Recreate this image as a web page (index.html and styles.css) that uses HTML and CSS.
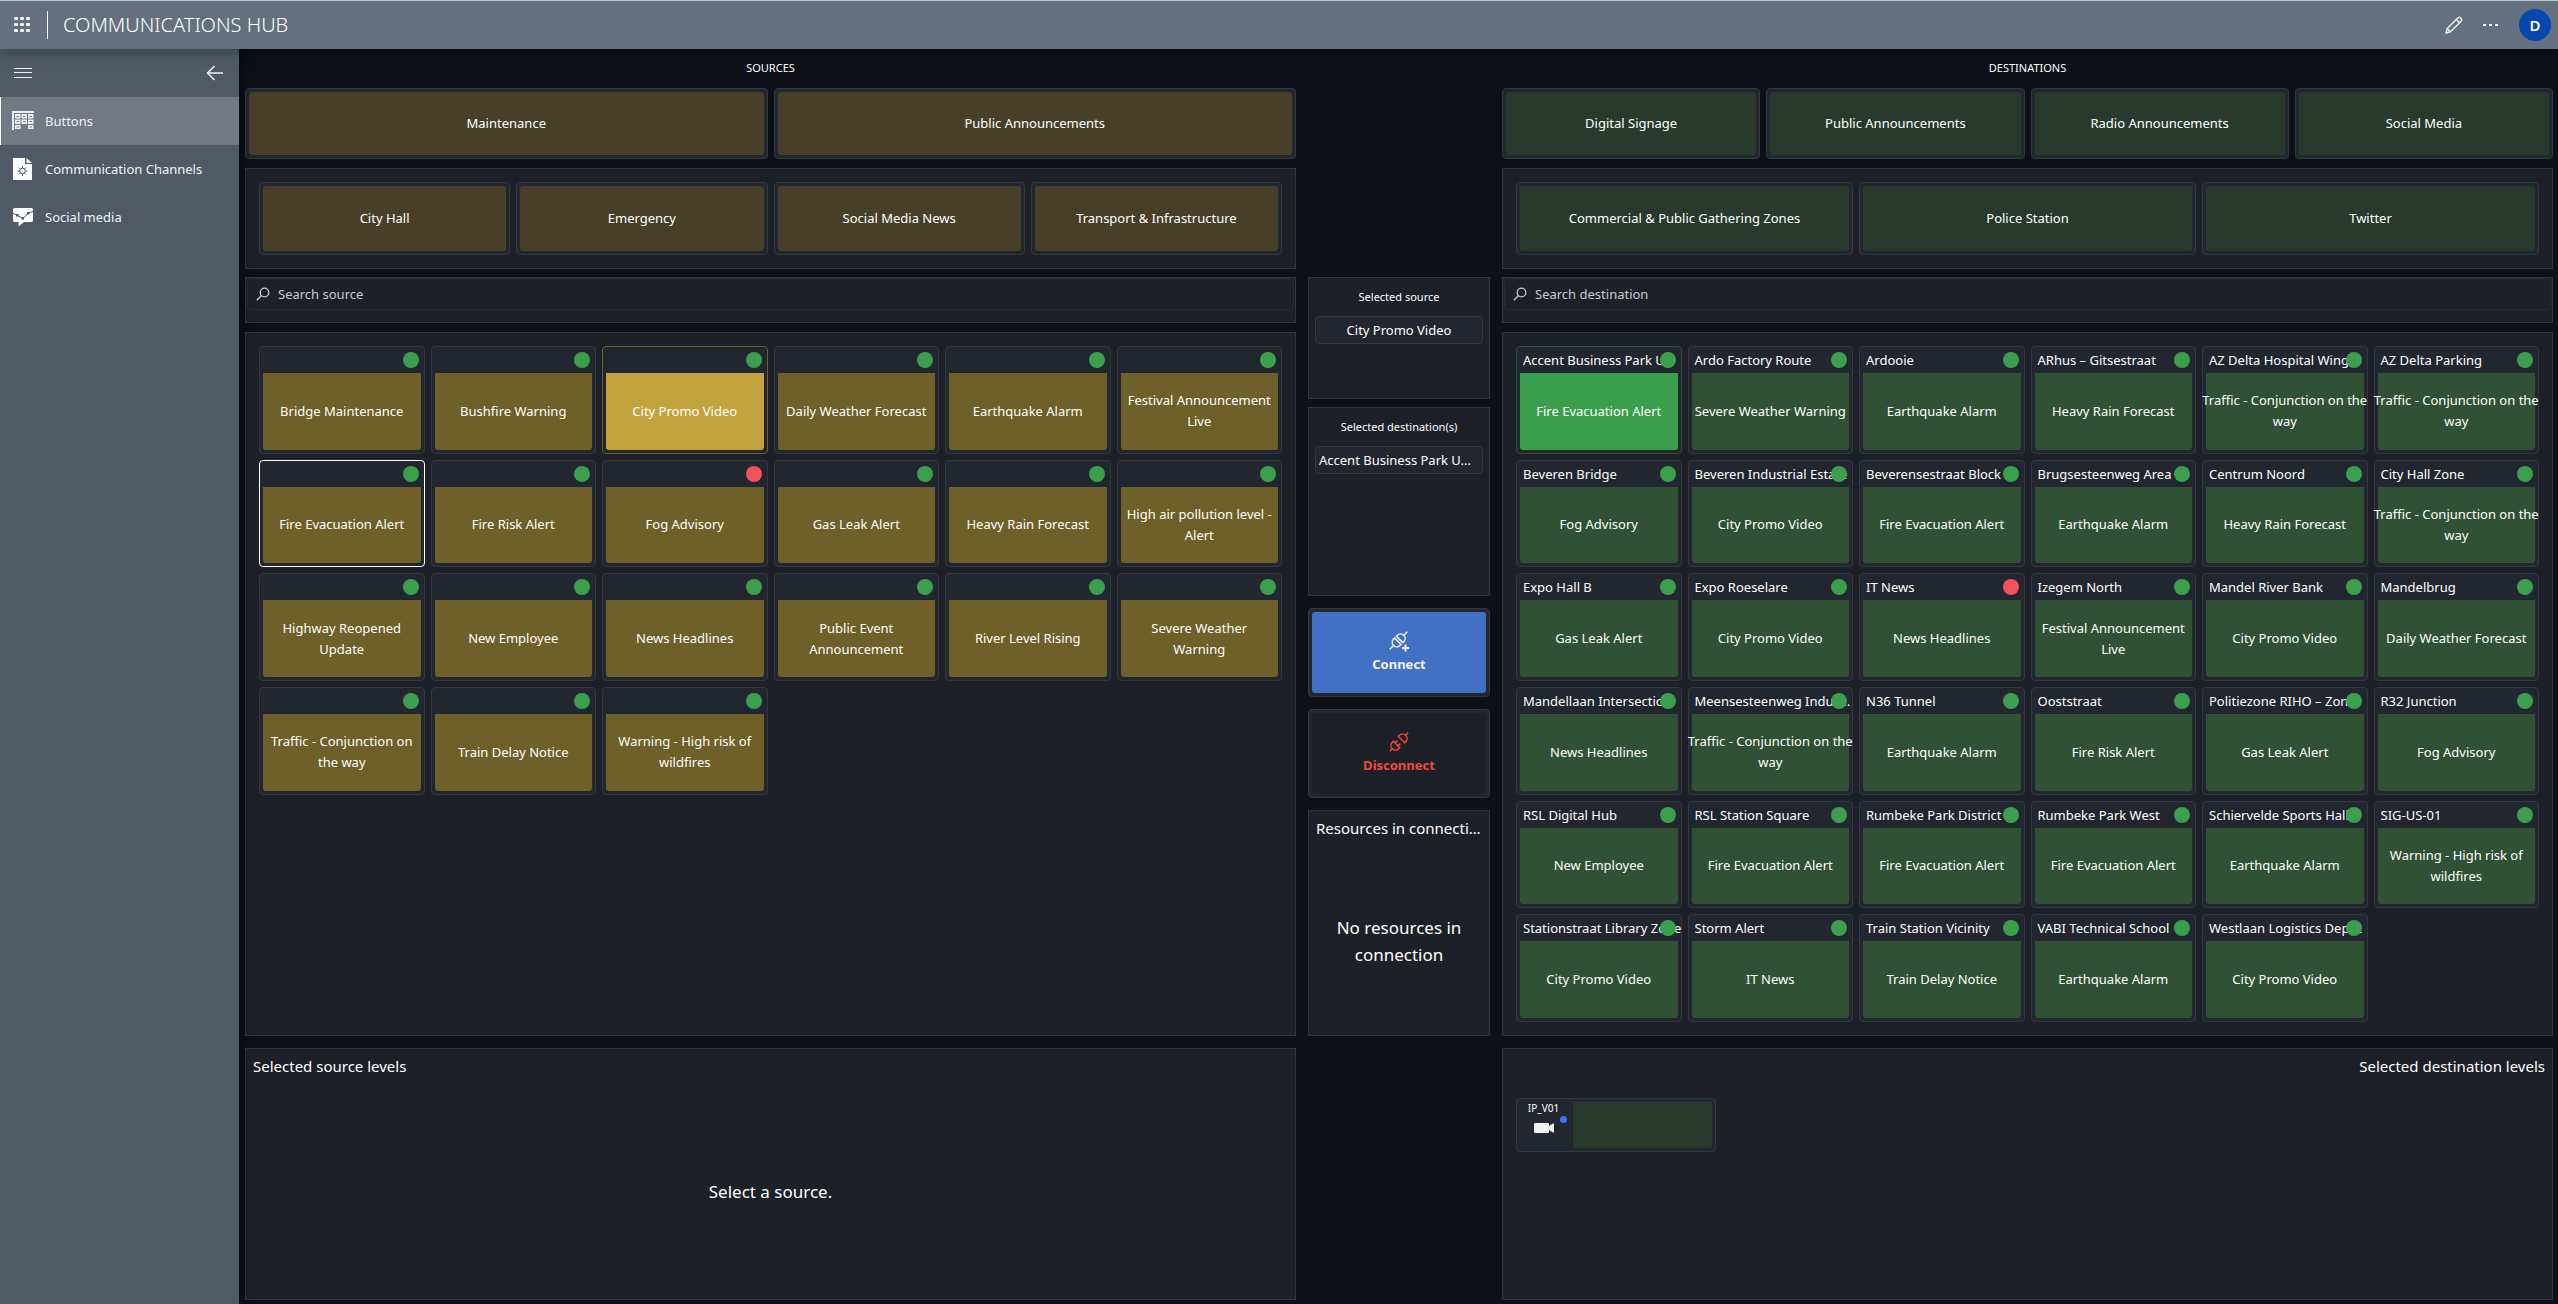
FILE: index.html
```html
<!DOCTYPE html>
<html lang="en">
  <head>
    <meta charset="UTF-8" />
    <meta name="viewport" content="width=device-width, initial-scale=1.0" />
    <title>Communications Hub</title>
    <link rel="stylesheet" href="styles.css">
  </head>
  <body>
    <header class="topbar">
      <button class="icon-btn" aria-label="Apps">
        <svg width="18" height="18" viewBox="0 0 18 18" fill="currentColor">
          <rect x="0" y="1" width="4" height="3" rx="1" /><rect x="6" y="1" width="4" height="3" rx="1" /><rect x="12" y="1" width="4" height="3" rx="1" />
          <rect x="0" y="7" width="4" height="3" rx="1" /><rect x="6" y="7" width="4" height="3" rx="1" /><rect x="12" y="7" width="4" height="3" rx="1" />
          <rect x="0" y="13" width="4" height="3" rx="1" /><rect x="6" y="13" width="4" height="3" rx="1" /><rect x="12" y="13" width="4" height="3" rx="1" />
        </svg>
      </button>
      <h1 class="title">COMMUNICATIONS HUB</h1>
      <div class="topbar-actions">
        <button class="icon-btn" aria-label="Edit">
          <svg width="18" height="18" viewBox="0 0 18 18" fill="none" stroke="currentColor" stroke-width="1.4" stroke-linejoin="round">
            <path d="M1 17l1.2-4.500L12.800 1.900a2 2 0 0 1 2.800 0l.5.5a2 2 0 0 1 0 2.800L5.500 15.800z" />
            <path d="M11.300 3.400l3.300 3.300M2.200 12.500l3.300 3.300" />
          </svg>
        </button>
        <button class="icon-btn" aria-label="More">
          <svg width="16" height="4" viewBox="0 0 16 4" fill="currentColor">
            <rect x="0" y="1" width="3" height="2" /><rect x="6" y="1" width="3" height="2" /><rect x="12" y="1" width="3" height="2" />
          </svg>
        </button>
        <button class="avatar">D</button>
      </div>
    </header>

    <div class="layout">
      <nav class="sidebar">
        <div class="sidebar-top">
          <button class="icon-btn" aria-label="Menu">
            <svg width="18" height="10" viewBox="0 0 18 10" stroke="currentColor" stroke-width="1">
              <path d="M0 .5h18M0 4.500h18M0 9.500h18" />
            </svg>
          </button>
          <button class="icon-btn" aria-label="Collapse">
            <svg width="18" height="16" viewBox="0 0 18 16" fill="none" stroke="currentColor" stroke-width="1.5">
              <path d="M8.500 1L1.500 8l7 7M1.500 8H17" />
            </svg>
          </button>
        </div>
        <a class="nav-item active" href="#">
          <svg width="22" height="20" viewBox="0 0 22 20">
            <path fill="#eee" d="M0 0h22v2H2v17H0zM3 3h5.500v4.500H3zM9.500 3H15v4.500H9.500zM16 3h5.500v4.500H16zM3 8.500h5.500V13H3zM9.500 8.500H15V13H9.500zM16 8.500h5.500V13H16zM3 14h5.500v4H3zM16 14h5.500v4H16z" />
            <path stroke="#727884" d="M4.500 5.500h2.500M11 5.500h2.500M17.500 5.500H20M4.500 10.500h2.500M11 10.500h2.500M17.500 10.500H20M4.500 16h2.500M17.500 16H20" />
          </svg>
          Buttons
        </a>
        <a class="nav-item" href="#">
          <svg width="22" height="22" viewBox="0 0 22 22">
            <path fill="#fff" d="M1 0h12v6h7v16H1z" />
            <path fill="#fff" d="M14.500 0L20 5h-5.500z" />
            <circle cx="10.500" cy="13" r="2.800" fill="none" stroke="#505a66" />
            <path stroke="#505a66" d="M10.500 8v2M10.500 16v2M5.500 13h2M13.500 13h2M7 9.500l1.500 1.500M12.500 15l1.500 1.500M14 9.500L12.500 11M8.500 15L7 16.500" />
          </svg>
          Communication Channels
        </a>
        <a class="nav-item" href="#">
          <svg width="22" height="20" viewBox="0 0 22 20">
            <path fill="#fff" d="M2.500 1h17a1.500 1.500 0 0 1 1.500 1.500v11a1.500 1.500 0 0 1-1.500 1.500H12l-5.500 4.500V15h-4A1.500 1.500 0 0 1 1 13.500v-11A1.500 1.500 0 0 1 2.500 1z" />
            <path fill="none" stroke="#505a66" d="M1 6.500l4 1.500 6 3.500 5.500-5.500 4.500-1.500" />
            <path fill="#505a66" d="M4 7h2.500v2.500H4zM9.500 10H12v2.500H9.500zM15 5h2.500v2.500H15z" />
          </svg>
          Social media
        </a>
      </nav>

      <main class="board">
        <section class="groups">
          <h2 class="side-label">SOURCES</h2>
          <div class="group-row">
            <button class="card source-group"><span class="face">Maintenance</span></button>
            <button class="card source-group"><span class="face">Public Announcements</span></button>
          </div>
          <div class="panel group-row sub-groups">
            <button class="card source-group"><span class="face">City Hall</span></button>
            <button class="card source-group"><span class="face">Emergency</span></button>
            <button class="card source-group"><span class="face">Social Media News</span></button>
            <button class="card source-group"><span class="face">Transport &amp; Infrastructure</span></button>
          </div>
        </section>

        <section class="groups destination-side">
          <h2 class="side-label">DESTINATIONS</h2>
          <div class="group-row">
            <button class="card destination-group"><span class="face">Digital Signage</span></button>
            <button class="card destination-group"><span class="face">Public Announcements</span></button>
            <button class="card destination-group"><span class="face">Radio Announcements</span></button>
            <button class="card destination-group"><span class="face">Social Media</span></button>
          </div>
          <div class="panel group-row sub-groups">
            <button class="card destination-group"><span class="face">Commercial &amp; Public Gathering Zones</span></button>
            <button class="card destination-group"><span class="face">Police Station</span></button>
            <button class="card destination-group"><span class="face">Twitter</span></button>
          </div>
        </section>

        <section class="resources">
          <div class="panel search-panel">
            <label class="search">
              <svg width="14" height="14" viewBox="0 0 14 14" fill="none" stroke="currentColor" stroke-width="1.3">
                <circle cx="8.500" cy="5.500" r="4.300" /><path d="M5.500 8.500L.8 13.200" />
              </svg>
              <input type="text" placeholder="Search source" aria-label="Search source" />
            </label>
          </div>
          <div class="panel tiles" id="sources"></div>
        </section>

        <section class="middle">
          <div class="selection">
            <div class="panel selected-source">
              <h3 class="small-title">Selected source</h3>
              <div class="chip">City Promo Video</div>
            </div>
            <div class="panel selected-destinations">
              <h3 class="small-title">Selected destination(s)</h3>
              <div class="chip chip-left">Accent Business Park U...</div>
            </div>
          </div>
          <button class="card action connect">
            <span class="face">
              <svg width="20" height="20" viewBox="0 0 20 20" fill="none" stroke="currentColor" stroke-width="1.5">
                <g transform="rotate(-45 9.5 9.5)">
                  <path d="M-3 9.500h5.500M8.500 5v9H7a4.500 4.500 0 0 1 0-9zM11 5v9h1.500a4.500 4.500 0 0 0 0-9zM17 9.500h5" />
                </g>
                <path stroke-width="2" d="M13 17h7M16.500 13.500v7" />
              </svg>
              Connect
            </span>
          </button>
          <button class="card action disconnect">
            <span class="face">
              <svg width="20" height="20" viewBox="0 0 20 20" fill="none" stroke="currentColor" stroke-width="1.5">
                <g transform="rotate(-45 10 10)">
                  <path d="M-3 10h3.500M6.500 5.500v9H5a4.500 4.500 0 0 1 0-9zM13.500 5.500v9H15a4.500 4.500 0 0 0 0-9zM19.500 10H23M6.500 8H10M6.500 12H10" />
                </g>
              </svg>
              Disconnect
            </span>
          </button>
          <div class="panel connection">
            <h3 class="panel-title">Resources in connection</h3>
            <p class="empty">No resources in connection</p>
          </div>
        </section>

        <section class="resources">
          <div class="panel search-panel">
            <label class="search">
              <svg width="14" height="14" viewBox="0 0 14 14" fill="none" stroke="currentColor" stroke-width="1.3">
                <circle cx="8.500" cy="5.500" r="4.300" /><path d="M5.500 8.500L.8 13.200" />
              </svg>
              <input type="text" placeholder="Search destination" aria-label="Search destination" />
            </label>
          </div>
          <div class="panel tiles" id="destinations"></div>
        </section>

        <section class="panel levels">
          <h3 class="panel-title">Selected source levels</h3>
          <p class="empty">Select a source.</p>
        </section>

        <section class="panel levels destination-side">
          <h3 class="panel-title">Selected destination levels</h3>
          <button class="card level" aria-label="IP_V01">
            <span class="level-info">
              <span class="level-name">IP_V01</span>
              <svg width="20" height="10" viewBox="0 0 20 10" fill="#f2f2f2">
                <path d="M1 0h13q1 0 1 1v2l4-2.500h1v9h-1L15 7v2q0 1-1 1H1q-1 0-1-1V1q0-1 1-1z" />
              </svg>
              <span class="level-dot"></span>
            </span>
            <span class="face destination-face"></span>
          </button>
        </section>
      </main>
    </div>
    <script src="app.js"></script>
  </body>
</html>
```
FILE: app.js
```js
//Sources: name of each source and its state
const sources = [
  { face: "Bridge Maintenance" },
  { face: "Bushfire Warning" },
  { face: "City Promo Video", state: "selected" },
  { face: "Daily Weather Forecast" },
  { face: "Earthquake Alarm" },
  { face: "Festival Announcement Live" },
  { face: "Fire Evacuation Alert", state: "current" },
  { face: "Fire Risk Alert" },
  { face: "Fog Advisory", error: true },
  { face: "Gas Leak Alert" },
  { face: "Heavy Rain Forecast" },
  { face: "High air pollution level - Alert" },
  { face: "Highway Reopened Update" },
  { face: "New Employee" },
  { face: "News Headlines" },
  { face: "Public Event Announcement" },
  { face: "River Level Rising" },
  { face: "Severe Weather Warning" },
  { face: "Traffic - Conjunction on the way" },
  { face: "Train Delay Notice" },
  { face: "Warning - High risk of wildfires" },
];

//Destinations: name and the source connected to it
const destinations = [
  { name: "Accent Business Park U", face: "Fire Evacuation Alert", state: "selected" },
  { name: "Ardo Factory Route", face: "Severe Weather Warning" },
  { name: "Ardooie", face: "Earthquake Alarm" },
  { name: "ARhus – Gitsestraat", face: "Heavy Rain Forecast" },
  { name: "AZ Delta Hospital Wing C", face: "Traffic - Conjunction on the way" },
  { name: "AZ Delta Parking", face: "Traffic - Conjunction on the way" },
  { name: "Beveren Bridge", face: "Fog Advisory" },
  { name: "Beveren Industrial Estate", face: "City Promo Video" },
  { name: "Beverensestraat Block", face: "Fire Evacuation Alert" },
  { name: "Brugsesteenweg Area", face: "Earthquake Alarm" },
  { name: "Centrum Noord", face: "Heavy Rain Forecast" },
  { name: "City Hall Zone", face: "Traffic - Conjunction on the way" },
  { name: "Expo Hall B", face: "Gas Leak Alert" },
  { name: "Expo Roeselare", face: "City Promo Video" },
  { name: "IT News", face: "News Headlines", error: true },
  { name: "Izegem North", face: "Festival Announcement Live" },
  { name: "Mandel River Bank", face: "City Promo Video" },
  { name: "Mandelbrug", face: "Daily Weather Forecast" },
  { name: "Mandellaan Intersection", face: "News Headlines" },
  { name: "Meensesteenweg Indus...", face: "Traffic - Conjunction on the way" },
  { name: "N36 Tunnel", face: "Earthquake Alarm" },
  { name: "Ooststraat", face: "Fire Risk Alert" },
  { name: "Politiezone RIHO – Zon...", face: "Gas Leak Alert" },
  { name: "R32 Junction", face: "Fog Advisory" },
  { name: "RSL Digital Hub", face: "New Employee" },
  { name: "RSL Station Square", face: "Fire Evacuation Alert" },
  { name: "Rumbeke Park District", face: "Fire Evacuation Alert" },
  { name: "Rumbeke Park West", face: "Fire Evacuation Alert" },
  { name: "Schiervelde Sports Hall", face: "Earthquake Alarm" },
  { name: "SIG-US-01", face: "Warning - High risk of wildfires" },
  { name: "Stationstraat Library Zone", face: "City Promo Video" },
  { name: "Storm Alert", face: "IT News" },
  { name: "Train Station Vicinity", face: "Train Delay Notice" },
  { name: "VABI Technical School", face: "Earthquake Alarm" },
  { name: "Westlaan Logistics Depot", face: "City Promo Video" },
];

function addTiles(id, items, kind) {
  const container = document.getElementById(id);
  items.forEach((item) => {
    const tile = document.createElement("button");
    tile.className = `card tile ${kind} ${item.state || ""}`;

    const name = document.createElement("span");
    name.className = "tile-name";
    name.textContent = item.name || "";

    const face = document.createElement("span");
    face.className = "face";
    const text = document.createElement("span");
    text.className = "face-text";
    text.textContent = item.face;
    face.append(text);

    const dot = document.createElement("span");
    dot.className = item.error ? "dot error" : "dot";

    tile.append(name, face, dot);
    container.append(tile);
  });
}

addTiles("sources", sources, "source");
addTiles("destinations", destinations, "destination");
```
FILE: styles.css
```css
* {
  box-sizing: border-box;
}
body {
  margin: 0;
  min-height: 100vh;
  display: flex;
  flex-direction: column;
  background-color: #0d1017;
  color: #fff;
  font-family: "Noto Sans", "Open Sans", sans-serif;
  font-size: 13px;
  line-height: 21px;
}
h1,
h2,
h3,
p {
  margin: 0;
  font-weight: 400;
}
button,
input {
  font: inherit;
  color: inherit;
}
svg {
  display: block;
  flex: none;
  overflow: visible;
}

/* Top bar */
.topbar {
  position: relative;
  z-index: 2;
  height: 49px;
  display: flex;
  align-items: center;
  padding: 0 7px 0 14px;
  background-color: #647080;
  border-top: 1px solid #c3c8c6;
  box-shadow: 0 2px 14px rgba(0, 0, 0, 0.35);
}
.icon-btn {
  padding: 0;
  border: 0;
  background: none;
  color: #f2f2f2;
}
.title {
  margin-left: 15px;
  padding-left: 15px;
  border-left: 1px solid #fff;
  font-size: 20px;
  font-weight: 300;
  line-height: 28px;
}
.topbar-actions {
  margin-left: auto;
  display: flex;
  align-items: center;
  gap: 20px;
}
.avatar {
  width: 32px;
  height: 32px;
  padding: 0;
  border: 0;
  border-radius: 50%;
  background-color: #0747b2;
  font-size: 15px;
  font-weight: 600;
}

.layout {
  flex: 1;
  display: flex;
}

/* Sidebar */
.sidebar {
  position: relative;
  z-index: 1;
  flex: none;
  width: 239px;
  background-color: #505a66;
  box-shadow: 2px 0 12px rgba(0, 0, 0, 0.4);
}
.sidebar-top {
  height: 48px;
  display: flex;
  align-items: center;
  justify-content: space-between;
  padding: 0 15px 0 14px;
}
.nav-item {
  height: 48px;
  display: flex;
  align-items: center;
  gap: 11px;
  padding-left: 11px;
  border-left: 1px solid transparent;
  color: #f2f2f2;
  text-decoration: none;
}
.nav-item.active {
  background-color: #727884;
  border-left-color: #fff;
}

/* Board */
.board {
  flex: 1;
  display: grid;
  grid-template-columns: minmax(0, 1fr) 182px minmax(0, 1fr);
  grid-template-rows: auto 1fr auto;
  column-gap: 12px;
  padding: 0 5px 4px 6px;
}
.destination-side {
  grid-column: 3;
}
.panel {
  background-color: #1d2027;
  border: 1px solid #33363b;
}
.card {
  display: grid;
  padding: 3px;
  background-color: #22262e;
  border: 1px solid #343840;
  border-radius: 4px;
}
.face {
  display: flex;
  align-items: center;
  justify-content: center;
  border-radius: 3px;
}
.side-label {
  margin-bottom: 2px;
  font-size: 11px;
  line-height: 37px;
  text-align: center;
}
.group-row {
  display: grid;
  grid-auto-flow: column;
  grid-auto-columns: minmax(0, 1fr);
  gap: 6px;
}
.group-row .card {
  min-height: 71px;
}
.sub-groups {
  margin-top: 9px;
  padding: 13px;
}
.sub-groups .card {
  min-height: 73px;
}
.source-group .face {
  background-color: #483f28;
}
.destination-group .face,
.destination-face {
  background-color: #273a2d;
}

/* Source and destination tiles */
.resources {
  display: flex;
  flex-direction: column;
  gap: 9px;
  margin-top: 8px;
}
.search-panel {
  height: 46px;
  padding: 0 1px;
}
.search {
  height: 32px;
  display: flex;
  align-items: center;
  gap: 8px;
  padding: 0 8px;
  border: 1px solid #282b33;
  border-radius: 4px;
  color: #c8cacd;
}
.search input {
  flex: 1;
  padding: 0;
  border: 0;
  outline: 0;
  background: none;
}
.search input::placeholder {
  color: #c8cacd;
  opacity: 1;
}
.tiles {
  flex: 1;
  display: grid;
  grid-template-columns: repeat(6, minmax(0, 1fr));
  grid-template-rows: repeat(6, minmax(96px, 1fr));
  gap: 6px;
  padding: 13px;
}
.tile {
  position: relative;
  grid-template-rows: 23px 1fr;
  grid-template-columns: minmax(0, 1fr);
}
.tile-name {
  padding-left: 3px;
  text-align: left;
  white-space: nowrap;
}
.tile .face {
  border-radius: 0 0 3px 3px;
}
.dot {
  position: absolute;
  top: 5px;
  right: 5px;
  width: 16px;
  height: 16px;
  border-radius: 50%;
  background-color: #3c9f4e;
}
.dot.error {
  background-color: #f4525c;
}
.source .face {
  padding: 0 4px;
  background-color: #6e6028;
}
.source.selected {
  border-color: #6e6028;
}
.source.selected .face {
  background-color: #c2a33d;
}
.source.current {
  border-color: #fff;
}
.destination .face {
  background-color: #305133;
}
.destination .face-text {
  margin: 0 -5px;
}
.destination.selected {
  border-color: #305133;
}
.destination.selected .face {
  background-color: #3a9f4c;
}

/* Middle column */
.middle {
  display: flex;
  flex-direction: column;
  gap: 12px;
  margin-top: 8px;
}
.selection {
  display: grid;
  gap: 8px;
}
.selected-source {
  min-height: 122px;
}
.selected-destinations {
  min-height: 189px;
}
.selected-source,
.selected-destinations {
  padding: 8px 6px;
}
.small-title {
  margin-bottom: 9px;
  font-size: 11px;
  text-align: center;
}
.chip {
  height: 28px;
  padding: 3px 3px;
  overflow: hidden;
  text-overflow: ellipsis;
  white-space: nowrap;
  text-align: center;
  background-color: #22262e;
  border: 1px solid #343840;
  border-radius: 4px;
}
.chip-left {
  text-align: left;
}
.action {
  min-height: 89px;
}
.action .face {
  flex-direction: column;
  gap: 3px;
  font-weight: 700;
}
.connect .face {
  background-color: #4170c4;
  color: #f2f2f2;
}
.disconnect .face {
  background-color: #1d2027;
  color: #f4483f;
}
.connection {
  flex: 1;
  display: flex;
  flex-direction: column;
}
.panel-title {
  padding: 7px;
  overflow: hidden;
  text-overflow: ellipsis;
  white-space: nowrap;
  font-size: 15px;
}
.empty {
  flex: 1;
  display: flex;
  align-items: center;
  justify-content: center;
  font-size: 17px;
  line-height: 27px;
  text-align: center;
}

/* Levels */
.levels {
  min-height: 252px;
  display: flex;
  flex-direction: column;
  margin-top: 12px;
}
.levels.destination-side .panel-title {
  text-align: right;
}
.level {
  width: 200px;
  height: 54px;
  grid-template-columns: 53px 1fr;
  margin: 14px 13px;
}
.level .face {
  border-radius: 0 3px 3px 0;
}
.level-info {
  position: relative;
  display: flex;
  flex-direction: column;
  align-items: center;
  gap: 8px;
  padding-right: 6px;
}
.level-name {
  font-size: 10px;
  line-height: 13px;
}
.level-dot {
  position: absolute;
  top: 14px;
  right: 6px;
  width: 7px;
  height: 7px;
  border-radius: 50%;
  background-color: #3b78f5;
}
```
